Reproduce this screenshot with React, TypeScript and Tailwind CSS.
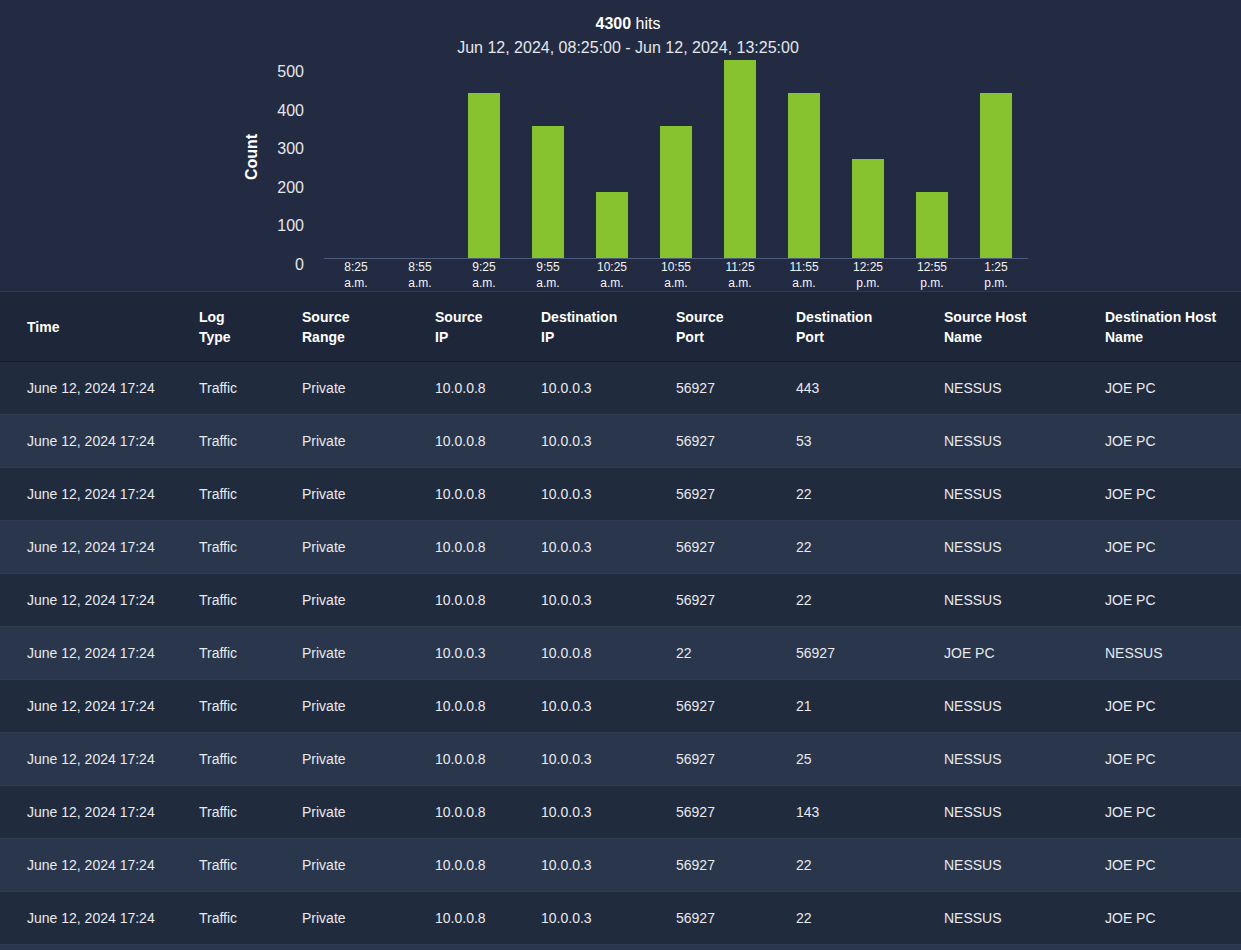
import React from 'react';

type Row = {
  srcIp: string;
  dstIp: string;
  srcPort: string;
  dstPort: string;
  srcHost: string;
  dstHost: string;
};

const bars = [
  { t: '8:25', p: 'a.m.', v: 0 },
  { t: '8:55', p: 'a.m.', v: 0 },
  { t: '9:25', p: 'a.m.', v: 440 },
  { t: '9:55', p: 'a.m.', v: 352 },
  { t: '10:25', p: 'a.m.', v: 176 },
  { t: '10:55', p: 'a.m.', v: 352 },
  { t: '11:25', p: 'a.m.', v: 528 },
  { t: '11:55', p: 'a.m.', v: 440 },
  { t: '12:25', p: 'p.m.', v: 264 },
  { t: '12:55', p: 'p.m.', v: 176 },
  { t: '1:25', p: 'p.m.', v: 440 },
];

const ticks = [
  { label: '500', y: 77 },
  { label: '400', y: 116 },
  { label: '300', y: 154 },
  { label: '200', y: 193 },
  { label: '100', y: 231 },
  { label: '0', y: 270 },
];

const fwd = (dstPort: string): Row => ({
  srcIp: '10.0.0.8',
  dstIp: '10.0.0.3',
  srcPort: '56927',
  dstPort,
  srcHost: 'NESSUS',
  dstHost: 'JOE PC',
});

const rows: Row[] = [
  fwd('443'),
  fwd('53'),
  fwd('22'),
  fwd('22'),
  fwd('22'),
  { srcIp: '10.0.0.3', dstIp: '10.0.0.8', srcPort: '22', dstPort: '56927', srcHost: 'JOE PC', dstHost: 'NESSUS' },
  fwd('21'),
  fwd('25'),
  fwd('143'),
  fwd('22'),
  fwd('22'),
];

const headers = [
  ['Time'],
  ['Log', 'Type'],
  ['Source', 'Range'],
  ['Source', 'IP'],
  ['Destination', 'IP'],
  ['Source', 'Port'],
  ['Destination', 'Port'],
  ['Source Host', 'Name'],
  ['Destination Host', 'Name'],
];

const gridCols = 'grid grid-cols-[172px_103px_133px_106px_135px_120px_148px_161px_1fr]';

function HitsChart() {
  const base = 258;
  return (
    <svg width="1241" height="291" className="block">
      <text x="628" y="29" textAnchor="middle" fontSize="16" fill="#ffffff">
        <tspan fontWeight="bold">4300</tspan> hits
      </text>
      <text x="628" y="53" textAnchor="middle" fontSize="16" fill="#e5e7eb">
        Jun 12, 2024, 08:25:00 - Jun 12, 2024, 13:25:00
      </text>

      <text
        transform="translate(257,157) rotate(-90)"
        textAnchor="middle"
        fontSize="16"
        fontWeight="bold"
        fill="#ffffff"
      >
        Count
      </text>

      {ticks.map((t) => (
        <text key={t.label} x="304" y={t.y} textAnchor="end" fontSize="16" fill="#e5e7eb">
          {t.label}
        </text>
      ))}

      {bars.map((b, i) => {
        const h = b.v * 0.375;
        const cx = 356 + i * 64;
        return (
          <g key={b.t}>
            {h > 0 && <rect x={cx - 16} y={base - h} width="32" height={h} fill="#87c22f" />}
            <text x={cx} y="271" textAnchor="middle" fontSize="12" fill="#f1f3f6">
              {b.t}
            </text>
            <text x={cx} y="287" textAnchor="middle" fontSize="12" fill="#f1f3f6">
              {b.p}
            </text>
          </g>
        );
      })}

      <line x1="324" x2="1028" y1="258.5" y2="258.5" stroke="#4d5c7c" strokeWidth="1" />
    </svg>
  );
}

export default function App() {
  return (
    <div className="min-h-screen bg-[#2a364b] font-['Liberation_Sans',Arial,sans-serif] text-[#e8eaee]">
      {/* Chart */}
      <div className="bg-[#222b42]">
        <HitsChart />
      </div>

      {/* Log table */}
      <div className={`${gridCols} h-[71px] items-center border-t border-b border-t-[#2e384d] border-b-[#141b29] bg-[#1e2739] text-sm font-bold leading-5 text-white`}>
        {headers.map((h, i) => (
          <div key={i} className="pl-[27px]">
            {h.map((line) => (
              <div key={line}>{line}</div>
            ))}
          </div>
        ))}
      </div>

      {rows.map((r, i) => (
        <div
          key={i}
          className={`${gridCols} h-[53px] items-center border-b border-[#303b50] text-sm ${
            i % 2 === 0 ? 'bg-[#212b3e]' : 'bg-[#2a364b]'
          }`}
        >
          <div className="pl-[27px]">June 12, 2024 17:24</div>
          <div className="pl-[27px]">Traffic</div>
          <div className="pl-[27px]">Private</div>
          <div className="pl-[27px]">{r.srcIp}</div>
          <div className="pl-[27px]">{r.dstIp}</div>
          <div className="pl-[27px]">{r.srcPort}</div>
          <div className="pl-[27px]">{r.dstPort}</div>
          <div className="pl-[27px]">{r.srcHost}</div>
          <div className="pl-[27px]">{r.dstHost}</div>
        </div>
      ))}
    </div>
  );
}
